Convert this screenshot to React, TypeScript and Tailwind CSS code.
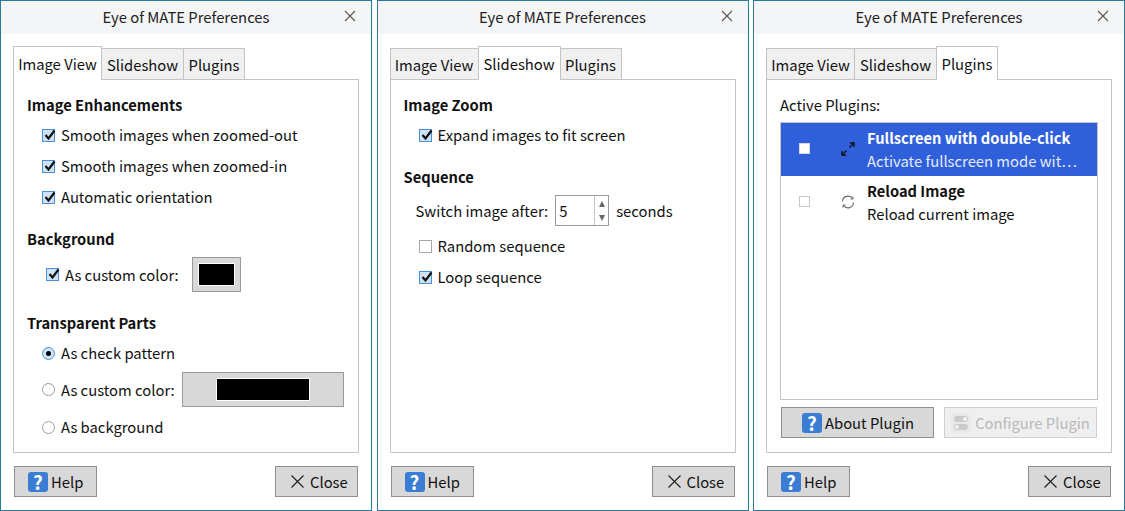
import React from "react";

const font = { fontFamily: '"Noto Sans CJK SC", "Noto Sans", sans-serif' };

function Check({ on }: { on: boolean }) {
  return (
    <span className={`relative block w-[13px] h-[13px] shrink-0 border ${on ? "border-[#4a90d9] bg-[#cfe3f7]" : "border-[#a8a8a8] bg-white"}`}>
      {on && (
        <svg className="absolute left-[0px] top-[-2px]" width="14" height="14" viewBox="0 0 14 14" fill="none">
          <path d="M2.5 7 L5.5 10.5 L11.5 2.5" stroke="#111" strokeWidth="2.2" />
        </svg>
      )}
    </span>
  );
}

function Radio({ on }: { on: boolean }) {
  return (
    <span className={`flex items-center justify-center w-[13px] h-[13px] shrink-0 rounded-full border ${on ? "border-[#4a90d9] bg-[#cfe3f7]" : "border-[#9a9a9a] bg-white"}`}>
      {on && <span className="block w-[5px] h-[5px] rounded-full bg-black" />}
    </span>
  );
}

function HelpIcon() {
  return (
    <span className="flex items-center justify-center w-[20px] h-[20px] rounded-[3px] bg-[#3b7dd3] text-white font-bold text-[19px] leading-none">?</span>
  );
}

function Btn({ children, className = "" }: { children: React.ReactNode; className?: string }) {
  return (
    <div className={`flex items-center h-[31px] whitespace-nowrap border border-[#8f8f8f] bg-[#d8d8d8] text-[14.8px] text-[#111] ${className}`}>
      {children}
    </div>
  );
}

function Tabs({ active }: { active: number }) {
  const tabs = [
    { label: "Image View", w: "w-[89px]", wa: "w-[89px]" },
    { label: "Slideshow", w: "w-[82px]", wa: "w-[83px] -ml-px" },
    { label: "Plugins", w: "w-[61px]", wa: "w-[62px] -ml-px" },
  ];
  return (
    <div className="flex items-end h-[33px] relative z-10">
      {tabs.map((t, i) => (
        <div
          key={t.label}
          className={
            i === active
              ? `relative flex items-center justify-center h-[34px] pt-[2px] -mb-px bg-white border border-b-0 border-[#c4c4c4] text-[14.8px] text-[#111] ${t.wa}`
              : `flex items-center justify-center h-[31px] pt-[2px] bg-[#f0f0f0] border border-b-0 border-[#c4c4c4] border-l-0 first:border-l text-[14.8px] text-[#111] ${t.w}`
          }
        >
          {t.label}
        </div>
      ))}
    </div>
  );
}

function Window({ active, className = "", children }: { active: number; className?: string; children: React.ReactNode }) {
  return (
    <div className={`flex flex-col h-[511px] bg-white border border-[#2a7a9b] ${className}`}>
      <div className="relative flex items-center justify-center h-[33px] shrink-0 bg-[#f4f5f6] text-[14.8px] text-[#222]">
        Eye of MATE Preferences
        <svg className="absolute right-[15px] top-[9px]" width="12" height="12" viewBox="0 0 12 12" fill="none">
          <path d="M1 1 L11 11 M11 1 L1 11" stroke="#555" strokeWidth="1.1" />
        </svg>
      </div>
      <div className="flex flex-col flex-1 px-[12px] pt-[12px]">
        <Tabs active={active} />
        <div className="h-[374px] border border-[#c4c4c4] bg-white">{children}</div>
        <div className="flex justify-between px-[1px] pt-[13px]">
          <Btn className="w-[83px] pl-[13px] gap-[3px]">
            <HelpIcon />
            <span className="pt-[2px]">Help</span>
          </Btn>
          <Btn className="w-[83px] pl-[15px] gap-[6px]">
            <svg width="13" height="13" viewBox="0 0 13 13" fill="none">
              <path d="M0.5 0.5 L12.5 12.5 M12.5 0.5 L0.5 12.5" stroke="#222" strokeWidth="1.2" />
            </svg>
            <span className="pt-[2px]">Close</span>
          </Btn>
        </div>
      </div>
    </div>
  );
}

function Heading({ children, className = "" }: { children: React.ReactNode; className?: string }) {
  return <div className={`h-[22px] leading-[22px] font-bold text-[14.7px] text-[#111] ${className}`}>{children}</div>;
}

function Row({ children, className = "" }: { children: React.ReactNode; className?: string }) {
  return <div className={`flex items-center whitespace-nowrap text-[14.8px] text-[#111] ${className}`}>{children}</div>;
}

function ColorBtn({ className = "", swatch = "" }: { className?: string; swatch?: string }) {
  return (
    <div className={`flex items-center justify-center h-[35px] border border-[#9a9a9a] bg-[#d8d8d8] ${className}`}>
      <div className={`h-[23px] bg-black border border-white ${swatch}`} />
    </div>
  );
}

function ImageView() {
  return (
    <div className="flex flex-col pl-[13px] pt-[14px] pr-[14px]">
      <Heading>Image Enhancements</Heading>
      <div className="flex flex-col gap-[9px] pt-[8px] pl-[15px]">
        <Row className="h-[22px] gap-[6px]"><Check on /><span>Smooth images when zoomed-out</span></Row>
        <Row className="h-[22px] gap-[6px]"><Check on /><span>Smooth images when zoomed-in</span></Row>
        <Row className="h-[22px] gap-[6px]"><Check on /><span>Automatic orientation</span></Row>
      </div>
      <Heading className="mt-[20px]">Background</Heading>
      <Row className="mt-[7px] pl-[19px] h-[35px]">
        <Check on />
        <span className="ml-[6px] pt-[2px]">As custom color:</span>
        <ColorBtn className="ml-[13px] w-[49px]" swatch="w-[37px]" />
      </Row>
      <Heading className="mt-[20px]">Transparent Parts</Heading>
      <Row className="mt-[8px] pl-[15px] h-[22px] gap-[6px]"><Radio on /><span>As check pattern</span></Row>
      <Row className="mt-[8px] pl-[15px] h-[35px]">
        <Radio on={false} />
        <span className="ml-[6px] pt-[2px]">As custom color:</span>
        <ColorBtn className="ml-[7px] w-[162px]" swatch="w-[94px]" />
      </Row>
      <Row className="mt-[9px] pl-[15px] h-[22px] gap-[6px]"><Radio on={false} /><span>As background</span></Row>
    </div>
  );
}

function Slideshow() {
  return (
    <div className="flex flex-col pl-[13px] pt-[14px]">
      <Heading>Image Zoom</Heading>
      <Row className="h-[22px] mt-[8px] pl-[15px] gap-[6px]"><Check on /><span>Expand images to fit screen</span></Row>
      <Heading className="mt-[20px]">Sequence</Heading>
      <Row className="mt-[7px] pl-[12px] h-[31px]">
        <span className="pt-[2px]">Switch image after:</span>
        <div className="ml-[7px] flex w-[54px] h-[31px] border border-[#9a9a9a]">
          <span className="flex-1 pl-[3px] leading-[29px]">5</span>
          <div className="flex flex-col items-center justify-center gap-[8px] w-[14px] border-l border-[#c4c4c4]">
            <svg width="6" height="6" viewBox="0 0 6 6"><path d="M3 0 L6 6 L0 6 Z" fill="#666" /></svg>
            <svg width="6" height="6" viewBox="0 0 6 6"><path d="M0 0 L6 0 L3 6 Z" fill="#666" /></svg>
          </div>
        </div>
        <span className="ml-[7px] pt-[2px]">seconds</span>
      </Row>
      <Row className="h-[22px] mt-[9px] pl-[15px] gap-[6px]"><Check on={false} /><span>Random sequence</span></Row>
      <Row className="h-[22px] mt-[9px] pl-[15px] gap-[6px]"><Check on /><span>Loop sequence</span></Row>
    </div>
  );
}

function Plugins() {
  return (
    <div className="flex flex-col px-[13px] pt-[14px]">
      <Row className="h-[22px]">Active Plugins:</Row>
      <div className="mt-[6px] h-[278px] border border-[#c4c4c4] bg-white">
        <div className="flex items-center h-[53px] pb-[2px] bg-[#2f5fdb]">
          <span className="ml-[18px] block w-[11px] h-[11px] bg-white border border-[#d8d8d8]" />
          <svg className="ml-[31px]" width="14" height="14" viewBox="0 0 14 14" fill="none" stroke="#111" strokeWidth="1.3">
            <path d="M8.5 5.5 L13 1 M9 1 H13 V5 M5.5 8.5 L1 13 M1 9 V13 H5" />
          </svg>
          <div className="ml-[12px] flex flex-col whitespace-nowrap">
            <span className="h-[23px] leading-[23px] font-bold text-[14.67px] text-white">Fullscreen with double-click</span>
            <span className="h-[23px] leading-[23px] text-[14.8px] text-[#e4eaf9]">Activate fullscreen mode wit⋯</span>
          </div>
        </div>
        <div className="flex items-center h-[53px] pb-[2px]">
          <span className="ml-[18px] block w-[11px] h-[11px] bg-white border border-[#c8c8c8]" />
          <svg className="ml-[31px]" width="14" height="14" viewBox="0 0 14 14" fill="none" stroke="#666" strokeWidth="1.1">
            <path d="M1.5 6.5 A5.5 5.5 0 0 1 11.5 3.5 M12.5 7.5 A5.5 5.5 0 0 1 2.5 10.5" />
            <path d="M9.5 4 H12 V1.5 M4.5 10 H2 V12.5" strokeWidth="1" />
          </svg>
          <div className="ml-[12px] flex flex-col whitespace-nowrap">
            <span className="h-[23px] leading-[23px] font-bold text-[14.67px] text-[#111]">Reload Image</span>
            <span className="h-[23px] leading-[23px] text-[14.8px] text-[#111]">Reload current image</span>
          </div>
        </div>
      </div>
      <div className="flex justify-between mt-[7px] px-[1px]">
        <Btn className="w-[153px] pl-[20px] gap-[3px]"><HelpIcon /><span className="pt-[2px]">About Plugin</span></Btn>
        <div className="flex items-center justify-center gap-[4px] w-[153px] h-[31px] whitespace-nowrap border border-[#d0d0d0] bg-[#efefef] text-[14.8px] text-[#b8b8b8]">
          <svg width="20" height="20" viewBox="0 0 20 20">
            <rect width="20" height="20" rx="6" fill="#e8e8e8" />
            <rect x="3" y="3" width="14" height="6" rx="3" fill="#cacaca" />
            <rect x="3" y="11" width="14" height="6" rx="3" fill="#cacaca" />
            <circle cx="14" cy="6" r="2" fill="#f0f0f0" />
            <circle cx="6" cy="14" r="2" fill="#f0f0f0" />
          </svg>
          <span className="pt-[2px]">Configure Plugin</span>
        </div>
      </div>
    </div>
  );
}

export default function App() {
  return (
    <div className="flex w-[1125px] h-[511px] justify-between bg-white overflow-hidden" style={font}>
      <Window active={0} className="w-[372px]"><ImageView /></Window>
      <Window active={1} className="w-[372px]"><Slideshow /></Window>
      <Window active={2} className="w-[372px]"><Plugins /></Window>
    </div>
  );
}
